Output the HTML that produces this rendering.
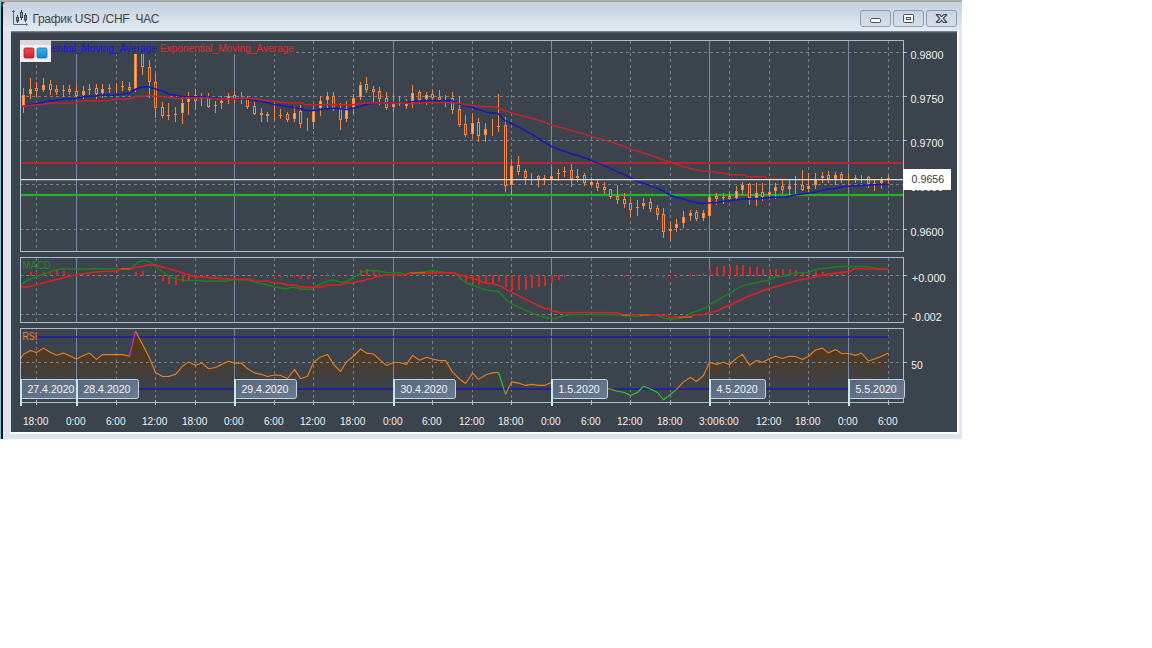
<!DOCTYPE html>
<html lang="ru">
<head>
<meta charset="utf-8">
<title>График USD /CHF ЧАС</title>
<style>
html,body{margin:0;padding:0;background:#fff;}
body{width:1152px;height:648px;position:relative;overflow:hidden;font-family:'Liberation Sans', sans-serif;}
.topstrip{position:absolute;left:0;top:0;width:962px;height:2px;background:linear-gradient(#b3afab 0,#b3afab 65%,#7c7c7c 100%);}
.leftstrip{position:absolute;left:0;top:2px;width:3px;height:437px;background:linear-gradient(90deg,#7fdcf0 0,#4cc4e0 35%,#000 36%,#000 100%);}
.corner{position:absolute;left:1px;top:2px;width:6px;height:5px;background:#3a3a3a;}
.win{position:absolute;left:3px;top:2px;width:959px;height:437px;background:#dbe5f1;border-top-left-radius:4px;}
.titlebar{position:absolute;left:0;top:0;width:959px;height:29px;background:linear-gradient(#c4d1e1 0,#d3dde9 50%,#e3eaf3 100%);border-top-left-radius:4px;}
.title{position:absolute;left:29.4px;top:9px;letter-spacing:-0.27px;font-size:12px;line-height:16px;color:#454545;white-space:pre;}
.btn{position:absolute;top:8px;width:29px;height:15px;border:1px solid #8c9cb4;border-radius:3px;background:linear-gradient(#c9d5e4,#d6dfeb);}
.panel{position:absolute;left:8px;top:29px;width:946px;height:401px;background:#3b434d;box-shadow:0 0 0 0 #000;}
.panel:before{content:"";position:absolute;left:0;top:0;width:100%;height:2px;background:linear-gradient(#8c95a0,#3b434d);}
.hl-r{position:absolute;left:954px;top:29px;width:2px;height:403px;background:#fff;}
.hl-b{position:absolute;left:7px;top:430px;width:949px;height:2px;background:#fff;}
svg{position:absolute;left:0;top:0;}
svg text{font-family:'Liberation Sans', sans-serif;}
</style>
</head>
<body>
<div class="topstrip"></div>
<div class="leftstrip"></div>
<div class="corner"></div>
<div class="win">
  <div class="titlebar"></div>
  <div class="title">График USD /CHF  ЧАС</div>
  <div class="btn" style="left:857px"></div>
  <div class="btn" style="left:890px"></div>
  <div class="btn" style="left:923px"></div>
  <div class="panel"></div>
  <div class="hl-r"></div>
  <div class="hl-b"></div>
</div>
<svg width="1152" height="648" viewBox="0 0 1152 648">
<!-- title icon -->
<g fill="none" stroke="#4d6a8c" stroke-width="1">
<path d="M13.5 10.5V24.5H27"/>
<path d="M12.2 12L13.5 10.3L14.8 12" />
<path d="M25.9 23.2L27.5 24.5L25.9 25.8" />
</g>
<g stroke="#3c4a55" stroke-width="1">
<line x1="17.5" y1="15" x2="17.5" y2="23"/><rect x="16.5" y="17.5" width="2" height="3.5" fill="#6fb06f"/>
<line x1="21.5" y1="10" x2="21.5" y2="20"/><rect x="20.5" y="12.5" width="2" height="5" fill="#6fb06f"/>
<line x1="25.5" y1="13" x2="25.5" y2="22"/><rect x="24.5" y="15.5" width="2" height="4.5" fill="#c07078"/>
</g>
<!-- window buttons glyphs -->
<rect x="870.5" y="18.5" width="10" height="4" rx="1" fill="#fff" stroke="#4c5159" stroke-width="1"/>
<rect x="903.5" y="14.5" width="10" height="8" rx="1" fill="#fff" stroke="#4c5159" stroke-width="1"/>
<rect x="906.5" y="17.5" width="4" height="2" fill="#fff" stroke="#4c5159" stroke-width="1"/>
<path d="M936.4 14.7h3.3l1.9 2.1 1.9-2.1h3.3l-3.6 3.8 3.6 3.8h-3.3l-1.9-2.1-1.9 2.1h-3.3l3.6-3.8z" fill="#fff" stroke="#454a52" stroke-width="1.25" stroke-linejoin="round"/>
<defs>
<clipPath id="c1"><rect x="21" y="41" width="882" height="210"/></clipPath>
<clipPath id="c2"><rect x="21" y="258" width="882" height="64"/></clipPath>
<clipPath id="c3"><rect x="21" y="329" width="882" height="73"/></clipPath>
<linearGradient id="rsig" gradientUnits="userSpaceOnUse" x1="0" y1="334" x2="0" y2="398"><stop offset="0" stop-color="#5e3408" stop-opacity="0.9"/><stop offset="0.45" stop-color="#573612" stop-opacity="0.55"/><stop offset="0.85" stop-color="#4a3a2c" stop-opacity="0.08"/><stop offset="1" stop-color="#4a3a2c" stop-opacity="0"/></linearGradient>
<linearGradient id="dbx" x1="0" y1="0" x2="1" y2="1"><stop offset="0" stop-color="#56667b"/><stop offset="1" stop-color="#6b7c92"/></linearGradient>
<linearGradient id="sqr" x1="0" y1="0" x2="0" y2="1"><stop offset="0" stop-color="#f4484e"/><stop offset="1" stop-color="#cf2533"/></linearGradient>
<linearGradient id="sqb" x1="0" y1="0" x2="0" y2="1"><stop offset="0" stop-color="#34b4ea"/><stop offset="1" stop-color="#1a80c2"/></linearGradient>
</defs>
<polygon points="20.5,358.75 23.5,354.2 30.5,350.4 36.5,352.5 43.5,348.1 50.5,352.5 56.5,355.2 63.5,353.1 69.5,355.8 76.5,359 83.5,355.6 89.5,353.1 96.5,359.4 102.5,354.6 109.5,354.6 116.5,354.6 122.5,354.6 129.5,356.25 135.5,331.25 142.5,344.6 149.5,358 155.5,372.5 162.5,376.5 168.5,376.5 175.5,374.4 182.5,366.25 188.5,362.1 195.5,365.25 201.5,362.9 208.5,368.75 215.5,367.5 221.5,364.4 228.5,361.25 234.5,363.1 241.5,363.1 247.5,368.75 254.5,372.9 261.5,374.4 267.5,376.5 274.5,375 280.5,375.4 287.5,378.5 294.5,369.4 300.5,378.75 307.5,376.25 313.5,362.5 320.5,356.9 327.5,354.4 333.5,364.4 340.5,371.5 346.5,361.9 353.5,356.25 360.5,349 366.5,353.1 373.5,354 379.5,359.4 386.5,365.6 393.5,362.5 399.5,362.5 406.5,364.4 412.5,355.4 419.5,360.25 426.5,357.25 432.5,359 439.5,360.6 445.5,360.6 452.5,371.9 459.5,379 465.5,383.5 472.5,373.1 478.5,379.4 485.5,375 492.5,372.9 498.5,372.25 505.5,394.4 511.5,381.9 518.5,383.1 525.5,385.4 531.5,384.4 538.5,385.4 544.5,385.4 551.5,382.5 558.5,383 564.5,384 571.5,385 577.5,385.5 584.5,386 591.5,387 597.5,388 604.5,388.6 610.5,389.1 617.5,391.25 624.5,392.5 630.5,395.6 637.5,392.5 643.5,386.25 650.5,389.1 657.5,392.5 663.5,399.75 670.5,394.4 676.5,389.4 683.5,381.9 690.5,377.5 696.5,381.5 703.5,375.5 709.5,362.25 716.5,364.4 723.5,362.25 729.5,364.75 736.5,358.1 742.5,354.4 749.5,365.25 756.5,360.4 762.5,362.25 769.5,358.75 775.5,356.25 782.5,358.5 789.5,356.25 795.5,356.5 802.5,359.4 808.5,356.25 815.5,350 822.5,348.1 828.5,353.1 835.5,349.4 841.5,353.5 848.5,353.5 855.5,355.4 861.5,353.1 868.5,361 874.5,359 881.5,356.25 888.5,353.1 888.5,402 20.5,402" fill="url(#rsig)" clip-path="url(#c3)"/>
<g shape-rendering="crispEdges">
<line x1="36.5" y1="41" x2="36.5" y2="251" stroke="#76808c" stroke-width="1" stroke-dasharray="3 3"/>
<line x1="36.5" y1="258" x2="36.5" y2="322" stroke="#76808c" stroke-width="1" stroke-dasharray="3 3"/>
<line x1="36.5" y1="329" x2="36.5" y2="402" stroke="#76808c" stroke-width="1" stroke-dasharray="3 3"/>
<line x1="116.5" y1="41" x2="116.5" y2="251" stroke="#76808c" stroke-width="1" stroke-dasharray="3 3"/>
<line x1="116.5" y1="258" x2="116.5" y2="322" stroke="#76808c" stroke-width="1" stroke-dasharray="3 3"/>
<line x1="116.5" y1="329" x2="116.5" y2="402" stroke="#76808c" stroke-width="1" stroke-dasharray="3 3"/>
<line x1="155.5" y1="41" x2="155.5" y2="251" stroke="#76808c" stroke-width="1" stroke-dasharray="3 3"/>
<line x1="155.5" y1="258" x2="155.5" y2="322" stroke="#76808c" stroke-width="1" stroke-dasharray="3 3"/>
<line x1="155.5" y1="329" x2="155.5" y2="402" stroke="#76808c" stroke-width="1" stroke-dasharray="3 3"/>
<line x1="195.5" y1="41" x2="195.5" y2="251" stroke="#76808c" stroke-width="1" stroke-dasharray="3 3"/>
<line x1="195.5" y1="258" x2="195.5" y2="322" stroke="#76808c" stroke-width="1" stroke-dasharray="3 3"/>
<line x1="195.5" y1="329" x2="195.5" y2="402" stroke="#76808c" stroke-width="1" stroke-dasharray="3 3"/>
<line x1="274.5" y1="41" x2="274.5" y2="251" stroke="#76808c" stroke-width="1" stroke-dasharray="3 3"/>
<line x1="274.5" y1="258" x2="274.5" y2="322" stroke="#76808c" stroke-width="1" stroke-dasharray="3 3"/>
<line x1="274.5" y1="329" x2="274.5" y2="402" stroke="#76808c" stroke-width="1" stroke-dasharray="3 3"/>
<line x1="313.5" y1="41" x2="313.5" y2="251" stroke="#76808c" stroke-width="1" stroke-dasharray="3 3"/>
<line x1="313.5" y1="258" x2="313.5" y2="322" stroke="#76808c" stroke-width="1" stroke-dasharray="3 3"/>
<line x1="313.5" y1="329" x2="313.5" y2="402" stroke="#76808c" stroke-width="1" stroke-dasharray="3 3"/>
<line x1="353.5" y1="41" x2="353.5" y2="251" stroke="#76808c" stroke-width="1" stroke-dasharray="3 3"/>
<line x1="353.5" y1="258" x2="353.5" y2="322" stroke="#76808c" stroke-width="1" stroke-dasharray="3 3"/>
<line x1="353.5" y1="329" x2="353.5" y2="402" stroke="#76808c" stroke-width="1" stroke-dasharray="3 3"/>
<line x1="432.5" y1="41" x2="432.5" y2="251" stroke="#76808c" stroke-width="1" stroke-dasharray="3 3"/>
<line x1="432.5" y1="258" x2="432.5" y2="322" stroke="#76808c" stroke-width="1" stroke-dasharray="3 3"/>
<line x1="432.5" y1="329" x2="432.5" y2="402" stroke="#76808c" stroke-width="1" stroke-dasharray="3 3"/>
<line x1="472.5" y1="41" x2="472.5" y2="251" stroke="#76808c" stroke-width="1" stroke-dasharray="3 3"/>
<line x1="472.5" y1="258" x2="472.5" y2="322" stroke="#76808c" stroke-width="1" stroke-dasharray="3 3"/>
<line x1="472.5" y1="329" x2="472.5" y2="402" stroke="#76808c" stroke-width="1" stroke-dasharray="3 3"/>
<line x1="511.5" y1="41" x2="511.5" y2="251" stroke="#76808c" stroke-width="1" stroke-dasharray="3 3"/>
<line x1="511.5" y1="258" x2="511.5" y2="322" stroke="#76808c" stroke-width="1" stroke-dasharray="3 3"/>
<line x1="511.5" y1="329" x2="511.5" y2="402" stroke="#76808c" stroke-width="1" stroke-dasharray="3 3"/>
<line x1="591.5" y1="41" x2="591.5" y2="251" stroke="#76808c" stroke-width="1" stroke-dasharray="3 3"/>
<line x1="591.5" y1="258" x2="591.5" y2="322" stroke="#76808c" stroke-width="1" stroke-dasharray="3 3"/>
<line x1="591.5" y1="329" x2="591.5" y2="402" stroke="#76808c" stroke-width="1" stroke-dasharray="3 3"/>
<line x1="630.5" y1="41" x2="630.5" y2="251" stroke="#76808c" stroke-width="1" stroke-dasharray="3 3"/>
<line x1="630.5" y1="258" x2="630.5" y2="322" stroke="#76808c" stroke-width="1" stroke-dasharray="3 3"/>
<line x1="630.5" y1="329" x2="630.5" y2="402" stroke="#76808c" stroke-width="1" stroke-dasharray="3 3"/>
<line x1="670.5" y1="41" x2="670.5" y2="251" stroke="#76808c" stroke-width="1" stroke-dasharray="3 3"/>
<line x1="670.5" y1="258" x2="670.5" y2="322" stroke="#76808c" stroke-width="1" stroke-dasharray="3 3"/>
<line x1="670.5" y1="329" x2="670.5" y2="402" stroke="#76808c" stroke-width="1" stroke-dasharray="3 3"/>
<line x1="729.5" y1="41" x2="729.5" y2="251" stroke="#76808c" stroke-width="1" stroke-dasharray="3 3"/>
<line x1="729.5" y1="258" x2="729.5" y2="322" stroke="#76808c" stroke-width="1" stroke-dasharray="3 3"/>
<line x1="729.5" y1="329" x2="729.5" y2="402" stroke="#76808c" stroke-width="1" stroke-dasharray="3 3"/>
<line x1="769.5" y1="41" x2="769.5" y2="251" stroke="#76808c" stroke-width="1" stroke-dasharray="3 3"/>
<line x1="769.5" y1="258" x2="769.5" y2="322" stroke="#76808c" stroke-width="1" stroke-dasharray="3 3"/>
<line x1="769.5" y1="329" x2="769.5" y2="402" stroke="#76808c" stroke-width="1" stroke-dasharray="3 3"/>
<line x1="808.5" y1="41" x2="808.5" y2="251" stroke="#76808c" stroke-width="1" stroke-dasharray="3 3"/>
<line x1="808.5" y1="258" x2="808.5" y2="322" stroke="#76808c" stroke-width="1" stroke-dasharray="3 3"/>
<line x1="808.5" y1="329" x2="808.5" y2="402" stroke="#76808c" stroke-width="1" stroke-dasharray="3 3"/>
<line x1="888.5" y1="41" x2="888.5" y2="251" stroke="#76808c" stroke-width="1" stroke-dasharray="3 3"/>
<line x1="888.5" y1="258" x2="888.5" y2="322" stroke="#76808c" stroke-width="1" stroke-dasharray="3 3"/>
<line x1="888.5" y1="329" x2="888.5" y2="402" stroke="#76808c" stroke-width="1" stroke-dasharray="3 3"/>
<line x1="76.5" y1="40.5" x2="76.5" y2="251.5" stroke="#788a9e" stroke-width="1"/>
<line x1="76.5" y1="257.5" x2="76.5" y2="322.5" stroke="#788a9e" stroke-width="1"/>
<line x1="76.5" y1="328.5" x2="76.5" y2="402.5" stroke="#788a9e" stroke-width="1"/>
<line x1="234.5" y1="40.5" x2="234.5" y2="251.5" stroke="#788a9e" stroke-width="1"/>
<line x1="234.5" y1="257.5" x2="234.5" y2="322.5" stroke="#788a9e" stroke-width="1"/>
<line x1="234.5" y1="328.5" x2="234.5" y2="402.5" stroke="#788a9e" stroke-width="1"/>
<line x1="393.5" y1="40.5" x2="393.5" y2="251.5" stroke="#788a9e" stroke-width="1"/>
<line x1="393.5" y1="257.5" x2="393.5" y2="322.5" stroke="#788a9e" stroke-width="1"/>
<line x1="393.5" y1="328.5" x2="393.5" y2="402.5" stroke="#788a9e" stroke-width="1"/>
<line x1="551.5" y1="40.5" x2="551.5" y2="251.5" stroke="#788a9e" stroke-width="1"/>
<line x1="551.5" y1="257.5" x2="551.5" y2="322.5" stroke="#788a9e" stroke-width="1"/>
<line x1="551.5" y1="328.5" x2="551.5" y2="402.5" stroke="#788a9e" stroke-width="1"/>
<line x1="709.5" y1="40.5" x2="709.5" y2="251.5" stroke="#788a9e" stroke-width="1"/>
<line x1="709.5" y1="257.5" x2="709.5" y2="322.5" stroke="#788a9e" stroke-width="1"/>
<line x1="709.5" y1="328.5" x2="709.5" y2="402.5" stroke="#788a9e" stroke-width="1"/>
<line x1="848.5" y1="40.5" x2="848.5" y2="251.5" stroke="#788a9e" stroke-width="1"/>
<line x1="848.5" y1="257.5" x2="848.5" y2="322.5" stroke="#788a9e" stroke-width="1"/>
<line x1="848.5" y1="328.5" x2="848.5" y2="402.5" stroke="#788a9e" stroke-width="1"/>
<line x1="20" y1="52.5" x2="903.5" y2="52.5" stroke="#76808c" stroke-width="1" stroke-dasharray="3 3"/>
<line x1="903.5" y1="52.5" x2="907" y2="52.5" stroke="#a9bdd1" stroke-width="1"/>
<line x1="20" y1="96.5" x2="903.5" y2="96.5" stroke="#76808c" stroke-width="1" stroke-dasharray="3 3"/>
<line x1="903.5" y1="96.5" x2="907" y2="96.5" stroke="#a9bdd1" stroke-width="1"/>
<line x1="20" y1="140.5" x2="903.5" y2="140.5" stroke="#76808c" stroke-width="1" stroke-dasharray="3 3"/>
<line x1="903.5" y1="140.5" x2="907" y2="140.5" stroke="#a9bdd1" stroke-width="1"/>
<line x1="20" y1="184.5" x2="903.5" y2="184.5" stroke="#76808c" stroke-width="1" stroke-dasharray="3 3"/>
<line x1="903.5" y1="184.5" x2="907" y2="184.5" stroke="#a9bdd1" stroke-width="1"/>
<line x1="20" y1="229.5" x2="903.5" y2="229.5" stroke="#76808c" stroke-width="1" stroke-dasharray="3 3"/>
<line x1="903.5" y1="229.5" x2="907" y2="229.5" stroke="#a9bdd1" stroke-width="1"/>
<line x1="20" y1="275.5" x2="903.5" y2="275.5" stroke="#76808c" stroke-width="1" stroke-dasharray="3 3"/>
<line x1="903.5" y1="275.5" x2="907" y2="275.5" stroke="#a9bdd1" stroke-width="1"/>
<line x1="20" y1="314.5" x2="903.5" y2="314.5" stroke="#76808c" stroke-width="1" stroke-dasharray="3 3"/>
<line x1="903.5" y1="314.5" x2="907" y2="314.5" stroke="#a9bdd1" stroke-width="1"/>
<line x1="20" y1="362.5" x2="903.5" y2="362.5" stroke="#76808c" stroke-width="1" stroke-dasharray="3 3"/>
<line x1="903.5" y1="362.5" x2="907" y2="362.5" stroke="#a9bdd1" stroke-width="1"/>
</g>
<g clip-path="url(#c3)">
<line x1="38" y1="337" x2="888.5" y2="337" stroke="#1a1aa8" stroke-width="1.7"/>
<line x1="20.5" y1="389" x2="888.5" y2="389" stroke="#1a1aa8" stroke-width="1.7"/>
<polyline points="20.5,358.75 23.5,354.2 30.5,350.4 36.5,352.5 43.5,348.1 50.5,352.5 56.5,355.2 63.5,353.1 69.5,355.8 76.5,359 83.5,355.6 89.5,353.1 96.5,359.4 102.5,354.6 109.5,354.6 116.5,354.6 122.5,354.6 129.5,356.25" fill="none" stroke="#e8801c" stroke-width="1.1" stroke-linejoin="round"/>
<polyline points="129.5,356.25 135.5,331.25" fill="none" stroke="#d828d8" stroke-width="1.1" stroke-linejoin="round"/>
<polyline points="135.5,331.25 142.5,344.6 149.5,358 155.5,372.5 162.5,376.5 168.5,376.5 175.5,374.4 182.5,366.25 188.5,362.1 195.5,365.25 201.5,362.9 208.5,368.75 215.5,367.5 221.5,364.4 228.5,361.25 234.5,363.1 241.5,363.1 247.5,368.75 254.5,372.9 261.5,374.4 267.5,376.5 274.5,375 280.5,375.4 287.5,378.5 294.5,369.4 300.5,378.75 307.5,376.25 313.5,362.5 320.5,356.9 327.5,354.4 333.5,364.4 340.5,371.5 346.5,361.9 353.5,356.25 360.5,349 366.5,353.1 373.5,354 379.5,359.4 386.5,365.6 393.5,362.5 399.5,362.5 406.5,364.4 412.5,355.4 419.5,360.25 426.5,357.25 432.5,359 439.5,360.6 445.5,360.6 452.5,371.9 459.5,379 465.5,383.5 472.5,373.1 478.5,379.4 485.5,375 492.5,372.9 498.5,372.25" fill="none" stroke="#e8801c" stroke-width="1.1" stroke-linejoin="round"/>
<polyline points="498.5,372.25 505.5,394.4" fill="none" stroke="#2ccc2c" stroke-width="1.1" stroke-linejoin="round"/>
<polyline points="505.5,394.4 511.5,381.9 518.5,383.1 525.5,385.4 531.5,384.4 538.5,385.4 544.5,385.4 551.5,382.5 558.5,383 564.5,384 571.5,385 577.5,385.5 584.5,386 591.5,387 597.5,388 604.5,388.6 610.5,389.1" fill="none" stroke="#e8801c" stroke-width="1.1" stroke-linejoin="round"/>
<polyline points="610.5,389.1 617.5,391.25 624.5,392.5 630.5,395.6 637.5,392.5 643.5,386.25 650.5,389.1 657.5,392.5 663.5,399.75 670.5,394.4 676.5,389.4" fill="none" stroke="#2ccc2c" stroke-width="1.1" stroke-linejoin="round"/>
<polyline points="676.5,389.4 683.5,381.9 690.5,377.5 696.5,381.5 703.5,375.5 709.5,362.25 716.5,364.4 723.5,362.25 729.5,364.75 736.5,358.1 742.5,354.4 749.5,365.25 756.5,360.4 762.5,362.25 769.5,358.75 775.5,356.25 782.5,358.5 789.5,356.25 795.5,356.5 802.5,359.4 808.5,356.25 815.5,350 822.5,348.1 828.5,353.1 835.5,349.4 841.5,353.5 848.5,353.5 855.5,355.4 861.5,353.1 868.5,361 874.5,359 881.5,356.25 888.5,353.1" fill="none" stroke="#e8801c" stroke-width="1.1" stroke-linejoin="round"/>
</g>
<g clip-path="url(#c2)">
<g shape-rendering="crispEdges">
<rect x="23" y="275" width="1" height="1" fill="#e02626"/>
<rect x="30" y="272" width="2" height="4" fill="#d42a2a"/>
<rect x="36" y="272" width="1" height="4" fill="#d42a2a"/>
<rect x="43" y="272" width="2" height="4" fill="#d42a2a"/>
<rect x="50" y="272" width="1" height="4" fill="#d42a2a"/>
<rect x="56" y="270" width="2" height="6" fill="#d42a2a"/>
<rect x="63" y="271" width="2" height="5" fill="#d42a2a"/>
<rect x="69" y="274" width="1" height="2" fill="#d42a2a"/>
<rect x="76" y="274" width="1" height="2" fill="#d42a2a"/>
<rect x="83" y="274" width="1" height="2" fill="#d42a2a"/>
<rect x="89" y="274" width="1" height="2" fill="#d42a2a"/>
<rect x="96" y="275" width="1" height="1" fill="#e02626"/>
<rect x="102" y="275" width="1" height="1" fill="#e02626"/>
<rect x="109" y="275" width="1" height="1" fill="#e02626"/>
<rect x="116" y="275" width="1" height="1" fill="#e02626"/>
<rect x="122" y="275" width="1" height="1" fill="#e02626"/>
<rect x="129" y="275" width="1" height="1" fill="#e02626"/>
<rect x="135" y="272" width="2" height="4" fill="#d42a2a"/>
<rect x="142" y="271" width="2" height="5" fill="#d42a2a"/>
<rect x="149" y="274" width="1" height="2" fill="#d42a2a"/>
<rect x="155" y="275" width="1" height="1" fill="#e02626"/>
<rect x="162" y="275" width="2" height="6" fill="#d42a2a"/>
<rect x="168" y="275" width="2" height="9" fill="#d42a2a"/>
<rect x="175" y="275" width="2" height="10" fill="#d42a2a"/>
<rect x="182" y="275" width="2" height="7" fill="#d42a2a"/>
<rect x="188" y="275" width="2" height="5" fill="#d42a2a"/>
<rect x="195" y="275" width="2" height="4" fill="#d42a2a"/>
<rect x="201" y="275" width="1" height="3" fill="#d42a2a"/>
<rect x="208" y="275" width="1" height="3" fill="#d42a2a"/>
<rect x="215" y="275" width="1" height="2" fill="#d42a2a"/>
<rect x="221" y="275" width="1" height="2" fill="#d42a2a"/>
<rect x="228" y="275" width="1" height="1" fill="#e02626"/>
<rect x="234" y="275" width="1" height="1" fill="#e02626"/>
<rect x="241" y="275" width="1" height="1" fill="#e02626"/>
<rect x="247" y="275" width="1" height="1" fill="#e02626"/>
<rect x="254" y="275" width="1" height="2" fill="#d42a2a"/>
<rect x="261" y="275" width="1" height="3" fill="#d42a2a"/>
<rect x="267" y="275" width="1" height="3" fill="#d42a2a"/>
<rect x="274" y="275" width="1" height="3" fill="#d42a2a"/>
<rect x="280" y="275" width="1" height="3" fill="#d42a2a"/>
<rect x="287" y="275" width="1" height="3" fill="#d42a2a"/>
<rect x="294" y="275" width="1" height="3" fill="#d42a2a"/>
<rect x="300" y="275" width="2" height="4" fill="#d42a2a"/>
<rect x="307" y="275" width="2" height="4" fill="#d42a2a"/>
<rect x="313" y="275" width="1" height="2" fill="#d42a2a"/>
<rect x="320" y="275" width="1" height="1" fill="#e02626"/>
<rect x="327" y="273" width="1" height="3" fill="#d42a2a"/>
<rect x="333" y="273" width="1" height="3" fill="#d42a2a"/>
<rect x="340" y="275" width="1" height="1" fill="#e02626"/>
<rect x="346" y="275" width="1" height="1" fill="#e02626"/>
<rect x="353" y="273" width="1" height="3" fill="#d42a2a"/>
<rect x="360" y="270" width="2" height="6" fill="#d42a2a"/>
<rect x="366" y="269" width="2" height="7" fill="#d42a2a"/>
<rect x="373" y="271" width="2" height="5" fill="#d42a2a"/>
<rect x="379" y="272" width="1" height="4" fill="#d42a2a"/>
<rect x="386" y="274" width="1" height="2" fill="#d42a2a"/>
<rect x="393" y="275" width="1" height="1" fill="#e02626"/>
<rect x="399" y="275" width="1" height="1" fill="#e02626"/>
<rect x="406" y="275" width="1" height="1" fill="#e02626"/>
<rect x="412" y="275" width="1" height="1" fill="#e02626"/>
<rect x="419" y="275" width="1" height="1" fill="#e02626"/>
<rect x="426" y="275" width="1" height="1" fill="#e02626"/>
<rect x="432" y="275" width="1" height="1" fill="#e02626"/>
<rect x="439" y="275" width="1" height="1" fill="#e02626"/>
<rect x="445" y="275" width="1" height="1" fill="#e02626"/>
<rect x="452" y="275" width="1" height="2" fill="#d42a2a"/>
<rect x="459" y="275" width="2" height="4" fill="#d42a2a"/>
<rect x="465" y="275" width="2" height="7" fill="#d42a2a"/>
<rect x="472" y="275" width="2" height="8" fill="#d42a2a"/>
<rect x="478" y="275" width="2" height="10" fill="#d42a2a"/>
<rect x="485" y="275" width="2" height="8" fill="#d42a2a"/>
<rect x="492" y="275" width="2" height="8" fill="#d42a2a"/>
<rect x="498" y="275" width="2" height="6" fill="#d42a2a"/>
<rect x="505" y="275" width="2" height="12" fill="#d42a2a"/>
<rect x="511" y="275" width="2" height="15" fill="#d42a2a"/>
<rect x="518" y="275" width="2" height="15" fill="#d42a2a"/>
<rect x="525" y="275" width="2" height="15" fill="#d42a2a"/>
<rect x="531" y="275" width="2" height="13" fill="#d42a2a"/>
<rect x="538" y="275" width="2" height="12" fill="#d42a2a"/>
<rect x="544" y="275" width="2" height="11" fill="#d42a2a"/>
<rect x="551" y="275" width="2" height="8" fill="#d42a2a"/>
<rect x="558" y="275" width="2" height="5" fill="#d42a2a"/>
<rect x="564" y="275" width="1" height="3" fill="#d42a2a"/>
<rect x="571" y="275" width="1" height="2" fill="#d42a2a"/>
<rect x="577" y="275" width="1" height="1" fill="#e02626"/>
<rect x="584" y="275" width="1" height="1" fill="#e02626"/>
<rect x="591" y="275" width="1" height="1" fill="#e02626"/>
<rect x="597" y="275" width="1" height="1" fill="#e02626"/>
<rect x="604" y="275" width="1" height="1" fill="#e02626"/>
<rect x="610" y="275" width="1" height="1" fill="#e02626"/>
<rect x="617" y="275" width="1" height="2" fill="#d42a2a"/>
<rect x="624" y="275" width="1" height="2" fill="#d42a2a"/>
<rect x="630" y="275" width="1" height="2" fill="#d42a2a"/>
<rect x="637" y="275" width="1" height="2" fill="#d42a2a"/>
<rect x="643" y="275" width="1" height="1" fill="#e02626"/>
<rect x="650" y="275" width="1" height="1" fill="#e02626"/>
<rect x="657" y="275" width="1" height="1" fill="#e02626"/>
<rect x="663" y="275" width="1" height="3" fill="#d42a2a"/>
<rect x="670" y="275" width="1" height="4" fill="#d42a2a"/>
<rect x="676" y="275" width="1" height="3" fill="#d42a2a"/>
<rect x="683" y="275" width="1" height="1" fill="#e02626"/>
<rect x="690" y="274" width="1" height="2" fill="#d42a2a"/>
<rect x="696" y="274" width="1" height="2" fill="#d42a2a"/>
<rect x="703" y="273" width="1" height="3" fill="#d42a2a"/>
<rect x="709" y="269" width="2" height="7" fill="#d42a2a"/>
<rect x="716" y="267" width="2" height="9" fill="#d42a2a"/>
<rect x="723" y="266" width="2" height="10" fill="#d42a2a"/>
<rect x="729" y="266" width="2" height="10" fill="#d42a2a"/>
<rect x="736" y="265" width="2" height="11" fill="#d42a2a"/>
<rect x="742" y="265" width="2" height="11" fill="#d42a2a"/>
<rect x="749" y="267" width="2" height="9" fill="#d42a2a"/>
<rect x="756" y="267" width="2" height="9" fill="#d42a2a"/>
<rect x="762" y="269" width="2" height="7" fill="#d42a2a"/>
<rect x="769" y="269" width="2" height="7" fill="#d42a2a"/>
<rect x="775" y="269" width="2" height="7" fill="#d42a2a"/>
<rect x="782" y="269" width="2" height="7" fill="#d42a2a"/>
<rect x="789" y="269" width="2" height="7" fill="#d42a2a"/>
<rect x="795" y="270" width="2" height="6" fill="#d42a2a"/>
<rect x="802" y="272" width="2" height="4" fill="#d42a2a"/>
<rect x="808" y="272" width="2" height="4" fill="#d42a2a"/>
<rect x="815" y="271" width="2" height="5" fill="#d42a2a"/>
<rect x="822" y="272" width="2" height="4" fill="#d42a2a"/>
<rect x="828" y="273" width="1" height="3" fill="#d42a2a"/>
<rect x="835" y="273" width="1" height="3" fill="#d42a2a"/>
<rect x="841" y="272" width="2" height="4" fill="#d42a2a"/>
<rect x="848" y="274" width="1" height="2" fill="#d42a2a"/>
<rect x="855" y="275" width="1" height="1" fill="#e02626"/>
<rect x="861" y="275" width="1" height="1" fill="#e02626"/>
<rect x="868" y="275" width="1" height="1" fill="#e02626"/>
<rect x="874" y="275" width="1" height="1" fill="#e02626"/>
<rect x="881" y="275" width="1" height="1" fill="#e02626"/>
<rect x="888" y="275" width="1" height="1" fill="#e02626"/>
</g>
<polyline points="20.5,285.6 24,282.5 30,279 36,276.9 43,274.4 50,271.9 56,270 60,269 118,268.75 130,268.75 133,266.9 137,263.1 141,261 145,260.6 150,261.9 155,266.25 160,270 165,273.75 170,276.9 176,279 182,280.25 195,280.6 208,281.25 225,281.25 232,280 241,279.4 248,280 254,281.9 261,283.5 268,285 274,286.9 281,288.1 286,289 292,287.25 295,287.25 300,289 310,289.4 314,287.25 320,284.4 325,281.9 330,280.6 335,280.6 340,281.9 345,281.9 350,280 354,276.9 358,275 362,272.25 367,270.6 374,270.6 380,271.25 386,272.5 400,272.75 406,274.4 410,272.75 425,271.9 432,270.6 436,271 445,272.5 455,273.1 459,276.9 462,280 465,282.5 472,285 479,287.5 485,289.75 492,291 497,291 499,291.9 502,295 505,298.75 508,301.25 512,304 518,306.9 525,310 531,312.5 538,315.6 545,317.5 551,318.5 555,318.5 560,316.9 565,315.6 570,314.75 580,314.4 612,314.4 620,315 628,316.25 640,316.25 645,315 655,315 660,316.25 665,318.5 670,319 677,318.75 683,317.5 688,315 692,312.5 697,311.25 703,308.5 705,308.1 710,304.4 716,301.25 723,296.9 730,293.1 736,289.4 743,285.6 750,284 756,282.75 762,281.25 768,280.6 771,278.75 776,276.9 782,276.25 789,274.4 795,272.75 808,272.5 815,270 820,268.75 828,268.1 835,266.9 848,266.25 866,266.7 872,267.6 878,269 888.5,269" fill="none" stroke="#1c821c" stroke-width="1.5" stroke-linejoin="round"/>
<polyline points="20.5,286.9 28,286.9 36,285 43,283.1 50,281.25 56,279.75 63,278.1 70,276.25 76,275 83,273.75 90,272.75 100,271.5 118,271 121,268.75 130,268.75 135,267.75 142,266.5 148,265 155.5,265.25 162,266.9 168,268.75 175,270.6 182,272.5 188,274.4 195,276.9 201,276.9 215,278.1 228,279 241,279.4 250,279.4 254,281 268,281.25 272,282.75 281,283.1 287,285 296,285 300,286.9 312,287.25 323,286.9 327,285 340,285 345,283.1 354,282.75 358,281.25 364,280.6 367,279 373,278.5 375,276.9 380,276.5 384,275 395,275 406,274.75 410,273.1 432,273.1 440,272.75 455,273.1 459,275 465,276.25 472,278.1 479,280.6 485,283.1 492,283.5 497,285 501,286 505,288.75 512,292.5 518,295.6 525,299 531,301.9 538,305.6 545,308.75 549,308.5 551,311 555,311.25 558,312.5 605,312.5 618,312.75 622,314.75 650,315 665,315.25 668,316.9 690,317.25 693,315 703,314.75 710,312.5 716,311.25 723,308.1 730,305 736,302.25 743,298.75 750,295.25 756,293.75 762,291 768,288.75 775,286.9 782,285 789,282.75 795,281.25 802,279.4 808,278.75 815,276.9 820,275.6 828,274.4 835,273.1 848,271.5 852,270.6 853,269 888.5,269" fill="none" stroke="#d92222" stroke-width="1.6" stroke-linejoin="round"/>
<polyline points="121,268.75 130,268.75" fill="none" stroke="#b4621c" stroke-width="1.6"/>
<polyline points="410.5,273 425,272.6" fill="none" stroke="#b4621c" stroke-width="1.6"/>
<polyline points="621.5,315 630,315.3" fill="none" stroke="#b4621c" stroke-width="1.6"/>
<polyline points="640,315.3 649,315" fill="none" stroke="#b4621c" stroke-width="1.6"/>
<polyline points="679,317.3 692,317" fill="none" stroke="#b4621c" stroke-width="1.6"/>
</g>
<g clip-path="url(#c1)">
<line x1="20.5" y1="163" x2="903.5" y2="163" stroke="#b5272d" stroke-width="1.8"/>
<line x1="20.5" y1="195" x2="903.5" y2="195" stroke="#1b8f1b" stroke-width="2.4"/>
<line x1="20.5" y1="195" x2="903.5" y2="195" stroke="#34cc34" stroke-width="1"/>
<g shape-rendering="crispEdges">
<rect x="23" y="88" width="1" height="7" fill="#f28a45"/>
<rect x="23" y="106" width="1" height="7" fill="#f28a45"/>
<rect x="22.5" y="95.5" width="2" height="10" fill="#ffb273" stroke="#f28a45" stroke-width="1"/>
<rect x="30" y="78" width="1" height="11" fill="#f28a45"/>
<rect x="30" y="94" width="1" height="5" fill="#f28a45"/>
<rect x="29.5" y="89.5" width="2" height="4" fill="#ffb273" stroke="#f28a45" stroke-width="1"/>
<rect x="36" y="82" width="1" height="6" fill="#f28a45"/>
<rect x="36" y="91" width="1" height="6" fill="#f28a45"/>
<rect x="35.5" y="88.5" width="2" height="2" fill="#3b434d" stroke="#f28a45" stroke-width="1"/>
<rect x="43" y="78" width="1" height="7" fill="#f28a45"/>
<rect x="43" y="90" width="1" height="2" fill="#f28a45"/>
<rect x="42.5" y="85.5" width="2" height="4" fill="#ffb273" stroke="#f28a45" stroke-width="1"/>
<rect x="50" y="80" width="1" height="4" fill="#f28a45"/>
<rect x="50" y="90" width="1" height="5" fill="#f28a45"/>
<rect x="49.5" y="84.5" width="2" height="5" fill="#3b434d" stroke="#f28a45" stroke-width="1"/>
<rect x="56" y="85" width="1" height="4" fill="#f28a45"/>
<rect x="56" y="92" width="1" height="3" fill="#f28a45"/>
<rect x="55.5" y="89.5" width="2" height="2" fill="#3b434d" stroke="#f28a45" stroke-width="1"/>
<rect x="63" y="85" width="1" height="12" fill="#f28a45"/>
<rect x="62" y="90" width="3" height="1" fill="#f28a45"/>
<rect x="69" y="85" width="1" height="4" fill="#f28a45"/>
<rect x="69" y="92" width="1" height="3" fill="#f28a45"/>
<rect x="68.5" y="89.5" width="2" height="2" fill="#3b434d" stroke="#f28a45" stroke-width="1"/>
<rect x="76" y="84" width="1" height="7" fill="#f28a45"/>
<rect x="76" y="96" width="1" height="2" fill="#f28a45"/>
<rect x="75.5" y="91.5" width="2" height="4" fill="#3b434d" stroke="#f28a45" stroke-width="1"/>
<rect x="83" y="86" width="1" height="5" fill="#f28a45"/>
<rect x="83" y="95" width="1" height="4" fill="#f28a45"/>
<rect x="82.5" y="91.5" width="2" height="3" fill="#ffb273" stroke="#f28a45" stroke-width="1"/>
<rect x="89" y="84" width="1" height="11" fill="#f28a45"/>
<rect x="88" y="89" width="3" height="1" fill="#f28a45"/>
<rect x="96" y="84" width="1" height="4" fill="#f28a45"/>
<rect x="96" y="94" width="1" height="5" fill="#f28a45"/>
<rect x="95.5" y="88.5" width="2" height="5" fill="#3b434d" stroke="#f28a45" stroke-width="1"/>
<rect x="102" y="84" width="1" height="5" fill="#f28a45"/>
<rect x="102" y="93" width="1" height="5" fill="#f28a45"/>
<rect x="101.5" y="89.5" width="2" height="3" fill="#ffb273" stroke="#f28a45" stroke-width="1"/>
<rect x="109" y="84" width="1" height="9" fill="#f28a45"/>
<rect x="108" y="88" width="3" height="1" fill="#f28a45"/>
<rect x="116" y="84" width="1" height="9" fill="#f28a45"/>
<rect x="122" y="81" width="1" height="10" fill="#f28a45"/>
<rect x="121" y="86" width="3" height="1" fill="#f28a45"/>
<rect x="129" y="82" width="1" height="5" fill="#f28a45"/>
<rect x="129" y="90" width="1" height="3" fill="#f28a45"/>
<rect x="128.5" y="87.5" width="2" height="2" fill="#3b434d" stroke="#f28a45" stroke-width="1"/>
<rect x="135" y="45" width="1" height="2" fill="#f28a45"/>
<rect x="135" y="89" width="1" height="3" fill="#f28a45"/>
<rect x="134.5" y="47.5" width="2" height="41" fill="#ffb273" stroke="#f28a45" stroke-width="1"/>
<rect x="142" y="44" width="1" height="2" fill="#f28a45"/>
<rect x="142" y="67" width="1" height="8" fill="#f28a45"/>
<rect x="141.5" y="46.5" width="2" height="20" fill="#3b434d" stroke="#f28a45" stroke-width="1"/>
<rect x="149" y="60" width="1" height="7" fill="#f28a45"/>
<rect x="149" y="82" width="1" height="16" fill="#f28a45"/>
<rect x="148.5" y="67.5" width="2" height="14" fill="#3b434d" stroke="#f28a45" stroke-width="1"/>
<rect x="155" y="74" width="1" height="8" fill="#f28a45"/>
<rect x="155" y="108" width="1" height="10" fill="#f28a45"/>
<rect x="154.5" y="82.5" width="2" height="25" fill="#3b434d" stroke="#f28a45" stroke-width="1"/>
<rect x="162" y="102" width="1" height="5" fill="#f28a45"/>
<rect x="162" y="116" width="1" height="2" fill="#f28a45"/>
<rect x="161.5" y="107.5" width="2" height="8" fill="#3b434d" stroke="#f28a45" stroke-width="1"/>
<rect x="168" y="103" width="1" height="17" fill="#f28a45"/>
<rect x="167" y="115" width="3" height="1" fill="#f28a45"/>
<rect x="175" y="107" width="1" height="15" fill="#f28a45"/>
<rect x="174" y="114" width="3" height="1" fill="#f28a45"/>
<rect x="182" y="97" width="1" height="6" fill="#f28a45"/>
<rect x="182" y="113" width="1" height="11" fill="#f28a45"/>
<rect x="181.5" y="103.5" width="2" height="9" fill="#ffb273" stroke="#f28a45" stroke-width="1"/>
<rect x="188" y="92" width="1" height="5" fill="#f28a45"/>
<rect x="188" y="102" width="1" height="13" fill="#f28a45"/>
<rect x="187.5" y="97.5" width="2" height="4" fill="#ffb273" stroke="#f28a45" stroke-width="1"/>
<rect x="195" y="89" width="1" height="6" fill="#f28a45"/>
<rect x="195" y="101" width="1" height="9" fill="#f28a45"/>
<rect x="194.5" y="95.5" width="2" height="5" fill="#3b434d" stroke="#f28a45" stroke-width="1"/>
<rect x="201" y="93" width="1" height="4" fill="#f28a45"/>
<rect x="201" y="99" width="1" height="7" fill="#f28a45"/>
<rect x="200.5" y="97.5" width="2" height="1" fill="#ffb273" stroke="#f28a45" stroke-width="1"/>
<rect x="208" y="93" width="1" height="4" fill="#f28a45"/>
<rect x="208" y="107" width="1" height="1" fill="#f28a45"/>
<rect x="207.5" y="97.5" width="2" height="9" fill="#3b434d" stroke="#f28a45" stroke-width="1"/>
<rect x="215" y="101" width="1" height="12" fill="#f28a45"/>
<rect x="214" y="105" width="3" height="1" fill="#f28a45"/>
<rect x="221" y="96" width="1" height="5" fill="#f28a45"/>
<rect x="221" y="103" width="1" height="6" fill="#f28a45"/>
<rect x="220.5" y="101.5" width="2" height="1" fill="#ffb273" stroke="#f28a45" stroke-width="1"/>
<rect x="228" y="93" width="1" height="3" fill="#f28a45"/>
<rect x="228" y="100" width="1" height="4" fill="#f28a45"/>
<rect x="227.5" y="96.5" width="2" height="3" fill="#ffb273" stroke="#f28a45" stroke-width="1"/>
<rect x="234" y="91" width="1" height="4" fill="#f28a45"/>
<rect x="234" y="99" width="1" height="4" fill="#f28a45"/>
<rect x="233.5" y="95.5" width="2" height="3" fill="#3b434d" stroke="#f28a45" stroke-width="1"/>
<rect x="241" y="92" width="1" height="12" fill="#f28a45"/>
<rect x="247" y="96" width="1" height="2" fill="#f28a45"/>
<rect x="247" y="107" width="1" height="2" fill="#f28a45"/>
<rect x="246.5" y="98.5" width="2" height="8" fill="#3b434d" stroke="#f28a45" stroke-width="1"/>
<rect x="254" y="102" width="1" height="4" fill="#f28a45"/>
<rect x="254" y="114" width="1" height="1" fill="#f28a45"/>
<rect x="253.5" y="106.5" width="2" height="7" fill="#3b434d" stroke="#f28a45" stroke-width="1"/>
<rect x="261" y="108" width="1" height="5" fill="#f28a45"/>
<rect x="261" y="115" width="1" height="7" fill="#f28a45"/>
<rect x="260.5" y="113.5" width="2" height="1" fill="#ffb273" stroke="#f28a45" stroke-width="1"/>
<rect x="267" y="112" width="1" height="2" fill="#f28a45"/>
<rect x="267" y="116" width="1" height="6" fill="#f28a45"/>
<rect x="266.5" y="114.5" width="2" height="1" fill="#3b434d" stroke="#f28a45" stroke-width="1"/>
<rect x="274" y="103" width="1" height="17" fill="#f28a45"/>
<rect x="280" y="109" width="1" height="10" fill="#f28a45"/>
<rect x="279" y="115" width="3" height="1" fill="#f28a45"/>
<rect x="287" y="112" width="1" height="2" fill="#f28a45"/>
<rect x="287" y="120" width="1" height="2" fill="#f28a45"/>
<rect x="286.5" y="114.5" width="2" height="5" fill="#3b434d" stroke="#f28a45" stroke-width="1"/>
<rect x="294" y="106" width="1" height="7" fill="#f28a45"/>
<rect x="294" y="119" width="1" height="3" fill="#f28a45"/>
<rect x="293.5" y="113.5" width="2" height="5" fill="#ffb273" stroke="#f28a45" stroke-width="1"/>
<rect x="300" y="105" width="1" height="6" fill="#f28a45"/>
<rect x="300" y="124" width="1" height="4" fill="#f28a45"/>
<rect x="299.5" y="111.5" width="2" height="12" fill="#3b434d" stroke="#f28a45" stroke-width="1"/>
<rect x="307" y="118" width="1" height="13" fill="#f28a45"/>
<rect x="313" y="106" width="1" height="4" fill="#f28a45"/>
<rect x="313" y="122" width="1" height="7" fill="#f28a45"/>
<rect x="312.5" y="110.5" width="2" height="11" fill="#ffb273" stroke="#f28a45" stroke-width="1"/>
<rect x="320" y="96" width="1" height="5" fill="#f28a45"/>
<rect x="320" y="108" width="1" height="8" fill="#f28a45"/>
<rect x="319.5" y="101.5" width="2" height="6" fill="#ffb273" stroke="#f28a45" stroke-width="1"/>
<rect x="327" y="92" width="1" height="4" fill="#f28a45"/>
<rect x="327" y="100" width="1" height="8" fill="#f28a45"/>
<rect x="326.5" y="96.5" width="2" height="3" fill="#ffb273" stroke="#f28a45" stroke-width="1"/>
<rect x="333" y="92" width="1" height="4" fill="#f28a45"/>
<rect x="333" y="108" width="1" height="3" fill="#f28a45"/>
<rect x="332.5" y="96.5" width="2" height="11" fill="#3b434d" stroke="#f28a45" stroke-width="1"/>
<rect x="340" y="103" width="1" height="5" fill="#f28a45"/>
<rect x="340" y="120" width="1" height="10" fill="#f28a45"/>
<rect x="339.5" y="108.5" width="2" height="11" fill="#3b434d" stroke="#f28a45" stroke-width="1"/>
<rect x="346" y="101" width="1" height="7" fill="#f28a45"/>
<rect x="346" y="119" width="1" height="3" fill="#f28a45"/>
<rect x="345.5" y="108.5" width="2" height="10" fill="#ffb273" stroke="#f28a45" stroke-width="1"/>
<rect x="353" y="94" width="1" height="4" fill="#f28a45"/>
<rect x="353" y="108" width="1" height="6" fill="#f28a45"/>
<rect x="352.5" y="98.5" width="2" height="9" fill="#ffb273" stroke="#f28a45" stroke-width="1"/>
<rect x="360" y="82" width="1" height="3" fill="#f28a45"/>
<rect x="360" y="97" width="1" height="3" fill="#f28a45"/>
<rect x="359.5" y="85.5" width="2" height="11" fill="#ffb273" stroke="#f28a45" stroke-width="1"/>
<rect x="366" y="77" width="1" height="7" fill="#f28a45"/>
<rect x="366" y="90" width="1" height="3" fill="#f28a45"/>
<rect x="365.5" y="84.5" width="2" height="5" fill="#3b434d" stroke="#f28a45" stroke-width="1"/>
<rect x="373" y="86" width="1" height="3" fill="#f28a45"/>
<rect x="373" y="92" width="1" height="11" fill="#f28a45"/>
<rect x="372.5" y="89.5" width="2" height="2" fill="#3b434d" stroke="#f28a45" stroke-width="1"/>
<rect x="379" y="87" width="1" height="4" fill="#f28a45"/>
<rect x="379" y="99" width="1" height="6" fill="#f28a45"/>
<rect x="378.5" y="91.5" width="2" height="7" fill="#3b434d" stroke="#f28a45" stroke-width="1"/>
<rect x="386" y="92" width="1" height="6" fill="#f28a45"/>
<rect x="386" y="108" width="1" height="2" fill="#f28a45"/>
<rect x="385.5" y="98.5" width="2" height="9" fill="#3b434d" stroke="#f28a45" stroke-width="1"/>
<rect x="393" y="94" width="1" height="10" fill="#f28a45"/>
<rect x="393" y="107" width="1" height="5" fill="#f28a45"/>
<rect x="392.5" y="104.5" width="2" height="2" fill="#ffb273" stroke="#f28a45" stroke-width="1"/>
<rect x="399" y="96" width="1" height="6" fill="#f28a45"/>
<rect x="399" y="104" width="1" height="2" fill="#f28a45"/>
<rect x="398.5" y="102.5" width="2" height="1" fill="#ffb273" stroke="#f28a45" stroke-width="1"/>
<rect x="406" y="99" width="1" height="5" fill="#f28a45"/>
<rect x="406" y="106" width="1" height="3" fill="#f28a45"/>
<rect x="405.5" y="104.5" width="2" height="1" fill="#ffb273" stroke="#f28a45" stroke-width="1"/>
<rect x="412" y="85" width="1" height="8" fill="#f28a45"/>
<rect x="412" y="104" width="1" height="4" fill="#f28a45"/>
<rect x="411.5" y="93.5" width="2" height="10" fill="#ffb273" stroke="#f28a45" stroke-width="1"/>
<rect x="419" y="90" width="1" height="2" fill="#f28a45"/>
<rect x="419" y="100" width="1" height="4" fill="#f28a45"/>
<rect x="418.5" y="92.5" width="2" height="7" fill="#3b434d" stroke="#f28a45" stroke-width="1"/>
<rect x="426" y="92" width="1" height="3" fill="#f28a45"/>
<rect x="426" y="99" width="1" height="6" fill="#f28a45"/>
<rect x="425.5" y="95.5" width="2" height="3" fill="#ffb273" stroke="#f28a45" stroke-width="1"/>
<rect x="432" y="90" width="1" height="4" fill="#f28a45"/>
<rect x="432" y="98" width="1" height="3" fill="#f28a45"/>
<rect x="431.5" y="94.5" width="2" height="3" fill="#3b434d" stroke="#f28a45" stroke-width="1"/>
<rect x="439" y="90" width="1" height="7" fill="#f28a45"/>
<rect x="439" y="100" width="1" height="1" fill="#f28a45"/>
<rect x="438.5" y="97.5" width="2" height="2" fill="#3b434d" stroke="#f28a45" stroke-width="1"/>
<rect x="445" y="95" width="1" height="12" fill="#f28a45"/>
<rect x="452" y="92" width="1" height="6" fill="#f28a45"/>
<rect x="452" y="110" width="1" height="4" fill="#f28a45"/>
<rect x="451.5" y="98.5" width="2" height="11" fill="#3b434d" stroke="#f28a45" stroke-width="1"/>
<rect x="459" y="96" width="1" height="13" fill="#f28a45"/>
<rect x="459" y="125" width="1" height="2" fill="#f28a45"/>
<rect x="458.5" y="109.5" width="2" height="15" fill="#3b434d" stroke="#f28a45" stroke-width="1"/>
<rect x="465" y="115" width="1" height="9" fill="#f28a45"/>
<rect x="465" y="135" width="1" height="2" fill="#f28a45"/>
<rect x="464.5" y="124.5" width="2" height="10" fill="#3b434d" stroke="#f28a45" stroke-width="1"/>
<rect x="472" y="114" width="1" height="9" fill="#f28a45"/>
<rect x="472" y="134" width="1" height="4" fill="#f28a45"/>
<rect x="471.5" y="123.5" width="2" height="10" fill="#ffb273" stroke="#f28a45" stroke-width="1"/>
<rect x="478" y="118" width="1" height="4" fill="#f28a45"/>
<rect x="478" y="136" width="1" height="6" fill="#f28a45"/>
<rect x="477.5" y="122.5" width="2" height="13" fill="#3b434d" stroke="#f28a45" stroke-width="1"/>
<rect x="485" y="123" width="1" height="6" fill="#f28a45"/>
<rect x="485" y="135" width="1" height="7" fill="#f28a45"/>
<rect x="484.5" y="129.5" width="2" height="5" fill="#ffb273" stroke="#f28a45" stroke-width="1"/>
<rect x="492" y="119" width="1" height="17" fill="#f28a45"/>
<rect x="498" y="94" width="1" height="38" fill="#f28a45"/>
<rect x="497" y="126" width="3" height="1" fill="#f28a45"/>
<rect x="505" y="117" width="1" height="8" fill="#f28a45"/>
<rect x="505" y="186" width="1" height="6" fill="#f28a45"/>
<rect x="504.5" y="125.5" width="2" height="60" fill="#3b434d" stroke="#f28a45" stroke-width="1"/>
<rect x="511" y="159" width="1" height="7" fill="#f28a45"/>
<rect x="511" y="185" width="1" height="10" fill="#f28a45"/>
<rect x="510.5" y="166.5" width="2" height="18" fill="#ffb273" stroke="#f28a45" stroke-width="1"/>
<rect x="518" y="156" width="1" height="9" fill="#f28a45"/>
<rect x="518" y="172" width="1" height="3" fill="#f28a45"/>
<rect x="517.5" y="165.5" width="2" height="6" fill="#3b434d" stroke="#f28a45" stroke-width="1"/>
<rect x="525" y="169" width="1" height="2" fill="#f28a45"/>
<rect x="525" y="178" width="1" height="6" fill="#f28a45"/>
<rect x="524.5" y="171.5" width="2" height="6" fill="#3b434d" stroke="#f28a45" stroke-width="1"/>
<rect x="531" y="173" width="1" height="12" fill="#f28a45"/>
<rect x="538" y="175" width="1" height="1" fill="#f28a45"/>
<rect x="538" y="179" width="1" height="8" fill="#f28a45"/>
<rect x="537.5" y="176.5" width="2" height="2" fill="#3b434d" stroke="#f28a45" stroke-width="1"/>
<rect x="544" y="175" width="1" height="3" fill="#f28a45"/>
<rect x="544" y="180" width="1" height="5" fill="#f28a45"/>
<rect x="543.5" y="178.5" width="2" height="1" fill="#ffb273" stroke="#f28a45" stroke-width="1"/>
<rect x="551" y="167" width="1" height="9" fill="#f28a45"/>
<rect x="551" y="179" width="1" height="5" fill="#f28a45"/>
<rect x="550.5" y="176.5" width="2" height="2" fill="#ffb273" stroke="#f28a45" stroke-width="1"/>
<rect x="558" y="169" width="1" height="12" fill="#f28a45"/>
<rect x="557" y="173" width="3" height="1" fill="#f28a45"/>
<rect x="564" y="167" width="1" height="10" fill="#f28a45"/>
<rect x="563" y="171" width="3" height="1" fill="#f28a45"/>
<rect x="571" y="164" width="1" height="6" fill="#f28a45"/>
<rect x="571" y="179" width="1" height="8" fill="#f28a45"/>
<rect x="570.5" y="170.5" width="2" height="8" fill="#3b434d" stroke="#f28a45" stroke-width="1"/>
<rect x="577" y="169" width="1" height="7" fill="#f28a45"/>
<rect x="577" y="178" width="1" height="4" fill="#f28a45"/>
<rect x="576.5" y="176.5" width="2" height="1" fill="#ffb273" stroke="#f28a45" stroke-width="1"/>
<rect x="584" y="173" width="1" height="2" fill="#f28a45"/>
<rect x="584" y="183" width="1" height="3" fill="#f28a45"/>
<rect x="583.5" y="175.5" width="2" height="7" fill="#3b434d" stroke="#f28a45" stroke-width="1"/>
<rect x="591" y="177" width="1" height="5" fill="#f28a45"/>
<rect x="591" y="185" width="1" height="1" fill="#f28a45"/>
<rect x="590.5" y="182.5" width="2" height="2" fill="#ffb273" stroke="#f28a45" stroke-width="1"/>
<rect x="597" y="180" width="1" height="3" fill="#f28a45"/>
<rect x="597" y="188" width="1" height="3" fill="#f28a45"/>
<rect x="596.5" y="183.5" width="2" height="4" fill="#3b434d" stroke="#f28a45" stroke-width="1"/>
<rect x="604" y="182" width="1" height="5" fill="#f28a45"/>
<rect x="604" y="190" width="1" height="4" fill="#f28a45"/>
<rect x="603.5" y="187.5" width="2" height="2" fill="#3b434d" stroke="#f28a45" stroke-width="1"/>
<rect x="610" y="189" width="1" height="0" fill="#f28a45"/>
<rect x="610" y="197" width="1" height="2" fill="#f28a45"/>
<rect x="609.5" y="189.5" width="2" height="7" fill="#3b434d" stroke="#f28a45" stroke-width="1"/>
<rect x="617" y="185" width="1" height="11" fill="#f28a45"/>
<rect x="617" y="200" width="1" height="4" fill="#f28a45"/>
<rect x="616.5" y="196.5" width="2" height="3" fill="#3b434d" stroke="#f28a45" stroke-width="1"/>
<rect x="624" y="193" width="1" height="6" fill="#f28a45"/>
<rect x="624" y="204" width="1" height="4" fill="#f28a45"/>
<rect x="623.5" y="199.5" width="2" height="4" fill="#3b434d" stroke="#f28a45" stroke-width="1"/>
<rect x="630" y="199" width="1" height="4" fill="#f28a45"/>
<rect x="630" y="210" width="1" height="7" fill="#f28a45"/>
<rect x="629.5" y="203.5" width="2" height="6" fill="#3b434d" stroke="#f28a45" stroke-width="1"/>
<rect x="637" y="200" width="1" height="16" fill="#f28a45"/>
<rect x="636" y="207" width="3" height="1" fill="#f28a45"/>
<rect x="643" y="198" width="1" height="5" fill="#f28a45"/>
<rect x="643" y="206" width="1" height="3" fill="#f28a45"/>
<rect x="642.5" y="203.5" width="2" height="2" fill="#ffb273" stroke="#f28a45" stroke-width="1"/>
<rect x="650" y="198" width="1" height="4" fill="#f28a45"/>
<rect x="650" y="209" width="1" height="3" fill="#f28a45"/>
<rect x="649.5" y="202.5" width="2" height="6" fill="#3b434d" stroke="#f28a45" stroke-width="1"/>
<rect x="657" y="205" width="1" height="3" fill="#f28a45"/>
<rect x="657" y="215" width="1" height="5" fill="#f28a45"/>
<rect x="656.5" y="208.5" width="2" height="6" fill="#3b434d" stroke="#f28a45" stroke-width="1"/>
<rect x="663" y="208" width="1" height="6" fill="#f28a45"/>
<rect x="663" y="232" width="1" height="6" fill="#f28a45"/>
<rect x="662.5" y="214.5" width="2" height="17" fill="#3b434d" stroke="#f28a45" stroke-width="1"/>
<rect x="670" y="222" width="1" height="7" fill="#f28a45"/>
<rect x="670" y="231" width="1" height="10" fill="#f28a45"/>
<rect x="669.5" y="229.5" width="2" height="1" fill="#ffb273" stroke="#f28a45" stroke-width="1"/>
<rect x="676" y="219" width="1" height="5" fill="#f28a45"/>
<rect x="676" y="228" width="1" height="4" fill="#f28a45"/>
<rect x="675.5" y="224.5" width="2" height="3" fill="#ffb273" stroke="#f28a45" stroke-width="1"/>
<rect x="683" y="211" width="1" height="6" fill="#f28a45"/>
<rect x="683" y="223" width="1" height="5" fill="#f28a45"/>
<rect x="682.5" y="217.5" width="2" height="5" fill="#ffb273" stroke="#f28a45" stroke-width="1"/>
<rect x="690" y="210" width="1" height="3" fill="#f28a45"/>
<rect x="690" y="216" width="1" height="5" fill="#f28a45"/>
<rect x="689.5" y="213.5" width="2" height="2" fill="#ffb273" stroke="#f28a45" stroke-width="1"/>
<rect x="696" y="210" width="1" height="2" fill="#f28a45"/>
<rect x="696" y="219" width="1" height="2" fill="#f28a45"/>
<rect x="695.5" y="212.5" width="2" height="6" fill="#3b434d" stroke="#f28a45" stroke-width="1"/>
<rect x="703" y="210" width="1" height="3" fill="#f28a45"/>
<rect x="703" y="218" width="1" height="3" fill="#f28a45"/>
<rect x="702.5" y="213.5" width="2" height="4" fill="#ffb273" stroke="#f28a45" stroke-width="1"/>
<rect x="709" y="194" width="1" height="3" fill="#f28a45"/>
<rect x="709" y="216" width="1" height="0" fill="#f28a45"/>
<rect x="708.5" y="197.5" width="2" height="18" fill="#ffb273" stroke="#f28a45" stroke-width="1"/>
<rect x="716" y="193" width="1" height="3" fill="#f28a45"/>
<rect x="716" y="199" width="1" height="6" fill="#f28a45"/>
<rect x="715.5" y="196.5" width="2" height="2" fill="#3b434d" stroke="#f28a45" stroke-width="1"/>
<rect x="723" y="193" width="1" height="11" fill="#f28a45"/>
<rect x="722" y="197" width="3" height="1" fill="#f28a45"/>
<rect x="729" y="192" width="1" height="4" fill="#f28a45"/>
<rect x="729" y="199" width="1" height="2" fill="#f28a45"/>
<rect x="728.5" y="196.5" width="2" height="2" fill="#3b434d" stroke="#f28a45" stroke-width="1"/>
<rect x="736" y="186" width="1" height="5" fill="#f28a45"/>
<rect x="736" y="198" width="1" height="2" fill="#f28a45"/>
<rect x="735.5" y="191.5" width="2" height="6" fill="#ffb273" stroke="#f28a45" stroke-width="1"/>
<rect x="742" y="182" width="1" height="3" fill="#f28a45"/>
<rect x="742" y="190" width="1" height="5" fill="#f28a45"/>
<rect x="741.5" y="185.5" width="2" height="4" fill="#ffb273" stroke="#f28a45" stroke-width="1"/>
<rect x="749" y="183" width="1" height="1" fill="#f28a45"/>
<rect x="749" y="198" width="1" height="7" fill="#f28a45"/>
<rect x="748.5" y="184.5" width="2" height="13" fill="#3b434d" stroke="#f28a45" stroke-width="1"/>
<rect x="756" y="183" width="1" height="10" fill="#f28a45"/>
<rect x="756" y="198" width="1" height="8" fill="#f28a45"/>
<rect x="755.5" y="193.5" width="2" height="4" fill="#ffb273" stroke="#f28a45" stroke-width="1"/>
<rect x="762" y="183" width="1" height="9" fill="#f28a45"/>
<rect x="762" y="197" width="1" height="4" fill="#f28a45"/>
<rect x="761.5" y="192.5" width="2" height="4" fill="#3b434d" stroke="#f28a45" stroke-width="1"/>
<rect x="769" y="180" width="1" height="12" fill="#f28a45"/>
<rect x="769" y="195" width="1" height="2" fill="#f28a45"/>
<rect x="768.5" y="192.5" width="2" height="2" fill="#ffb273" stroke="#f28a45" stroke-width="1"/>
<rect x="775" y="183" width="1" height="4" fill="#f28a45"/>
<rect x="775" y="191" width="1" height="8" fill="#f28a45"/>
<rect x="774.5" y="187.5" width="2" height="3" fill="#ffb273" stroke="#f28a45" stroke-width="1"/>
<rect x="782" y="180" width="1" height="6" fill="#f28a45"/>
<rect x="782" y="190" width="1" height="4" fill="#f28a45"/>
<rect x="781.5" y="186.5" width="2" height="3" fill="#3b434d" stroke="#f28a45" stroke-width="1"/>
<rect x="789" y="180" width="1" height="6" fill="#f28a45"/>
<rect x="789" y="189" width="1" height="7" fill="#f28a45"/>
<rect x="788.5" y="186.5" width="2" height="2" fill="#ffb273" stroke="#f28a45" stroke-width="1"/>
<rect x="795" y="176" width="1" height="18" fill="#f28a45"/>
<rect x="794" y="184" width="3" height="1" fill="#f28a45"/>
<rect x="802" y="170" width="1" height="15" fill="#f28a45"/>
<rect x="802" y="190" width="1" height="1" fill="#f28a45"/>
<rect x="801.5" y="185.5" width="2" height="4" fill="#3b434d" stroke="#f28a45" stroke-width="1"/>
<rect x="808" y="173" width="1" height="13" fill="#f28a45"/>
<rect x="808" y="189" width="1" height="3" fill="#f28a45"/>
<rect x="807.5" y="186.5" width="2" height="2" fill="#ffb273" stroke="#f28a45" stroke-width="1"/>
<rect x="815" y="173" width="1" height="6" fill="#f28a45"/>
<rect x="815" y="185" width="1" height="4" fill="#f28a45"/>
<rect x="814.5" y="179.5" width="2" height="5" fill="#ffb273" stroke="#f28a45" stroke-width="1"/>
<rect x="822" y="172" width="1" height="4" fill="#f28a45"/>
<rect x="822" y="178" width="1" height="5" fill="#f28a45"/>
<rect x="821.5" y="176.5" width="2" height="1" fill="#ffb273" stroke="#f28a45" stroke-width="1"/>
<rect x="828" y="171" width="1" height="4" fill="#f28a45"/>
<rect x="828" y="179" width="1" height="4" fill="#f28a45"/>
<rect x="827.5" y="175.5" width="2" height="3" fill="#3b434d" stroke="#f28a45" stroke-width="1"/>
<rect x="835" y="172" width="1" height="3" fill="#f28a45"/>
<rect x="835" y="179" width="1" height="6" fill="#f28a45"/>
<rect x="834.5" y="175.5" width="2" height="3" fill="#ffb273" stroke="#f28a45" stroke-width="1"/>
<rect x="841" y="172" width="1" height="2" fill="#f28a45"/>
<rect x="841" y="179" width="1" height="4" fill="#f28a45"/>
<rect x="840.5" y="174.5" width="2" height="4" fill="#3b434d" stroke="#f28a45" stroke-width="1"/>
<rect x="848" y="174" width="1" height="12" fill="#f28a45"/>
<rect x="855" y="175" width="1" height="3" fill="#f28a45"/>
<rect x="855" y="180" width="1" height="3" fill="#f28a45"/>
<rect x="854.5" y="178.5" width="2" height="1" fill="#ffb273" stroke="#f28a45" stroke-width="1"/>
<rect x="861" y="175" width="1" height="8" fill="#f28a45"/>
<rect x="860" y="179" width="3" height="1" fill="#f28a45"/>
<rect x="868" y="176" width="1" height="1" fill="#f28a45"/>
<rect x="868" y="184" width="1" height="4" fill="#f28a45"/>
<rect x="867.5" y="177.5" width="2" height="6" fill="#3b434d" stroke="#f28a45" stroke-width="1"/>
<rect x="874" y="180" width="1" height="11" fill="#f28a45"/>
<rect x="873" y="183" width="3" height="1" fill="#f28a45"/>
<rect x="881" y="177" width="1" height="3" fill="#f28a45"/>
<rect x="881" y="183" width="1" height="6" fill="#f28a45"/>
<rect x="880.5" y="180.5" width="2" height="2" fill="#ffb273" stroke="#f28a45" stroke-width="1"/>
<rect x="888" y="175" width="1" height="3" fill="#f28a45"/>
<rect x="888" y="180" width="1" height="4" fill="#f28a45"/>
<rect x="887.5" y="178.5" width="2" height="1" fill="#ffb273" stroke="#f28a45" stroke-width="1"/>
</g>
<polyline points="20.5,106.75 30,104.9 36.5,103.6 50,101.1 63,99.25 76,98.4 83,96.75 96,96.1 103,95.25 116,94.9 123,94.25 129.5,92.75 135.5,89.25 142,87 149,87 155.5,89 162,90.9 168.7,94 175,95 182,96.5 195,96.75 208,97.1 215,98 228,98.75 241,98.75 248,99 254.5,100.5 261,101.5 268,102.75 274,104.6 281,105.25 287.5,106.5 294,107.4 300,108.75 307,110.6 314,110.6 320.5,109.4 327,108.75 334,108.1 340,108.75 347,109.4 353.5,108.1 360,106.25 366.7,104.4 373,103.4 380,102.9 393,102.4 406,102.2 413,101.6 420,101.2 426,100.9 432,100.7 452,100.6 459,103.75 465,105.6 472,107.5 479,109.75 485.5,111.9 492,113.1 497,113.1 499,114.4 505,120.6 512,123.75 518.5,126.9 525,130.6 532,134.4 538,138.1 545,142.5 551,146.25 558,149 565,151.5 571,153.75 578,155.6 584,157.5 591,160.4 597.7,163.1 604,165.6 611,168.75 617.5,171.9 624,174.4 630.7,177.8 637,181 644,183.5 650.5,185.6 657,188.1 663.7,191.25 670,195 677,197.5 683.5,199 690,201 697,202.75 703,203.5 710,202.75 716.5,202.75 723,201.25 730,200.6 736,200 743,199 750,199 756,198.75 762,198.6 769,197.5 786,196.9 793,195.25 802,194 808.9,193.1 815.5,192.25 822,190.6 828.7,189 835,188.75 842,186.9 848.5,186.25 862,185.6 875,184.75 888.5,184.4" fill="none" stroke="#1717bd" stroke-width="1.5" stroke-linejoin="round"/>
<polyline points="20.5,106.75 30,105.5 43,104.25 50,103 76,102.75 83,100.5 96,100.9 110,100.5 116.5,99 130,99 135.5,96.5 142,96.5 149,95.25 155.5,96.3 168,97.1 175,98.4 195,98 208,98 215,98.75 234,98.75 241,97.9 254,98.75 261,100 274,101.25 281,102.5 294,103 303,103.1 305,104.75 320,104.75 327,104.4 353,104.75 360,103.75 366,103.1 380,103.1 400,102.9 412,103.5 420,102.75 432,102.6 452,102.75 459,103.1 465,104.75 479,106.25 497,106.9 499,108.75 505,110.6 512,113.1 525,116.5 538,120 551,124.75 558,126.9 564,128.1 571,130.6 584.5,134.4 597.7,138.1 611,141.9 624,146.25 631,149.4 637,151 650,155 664,160 677,164.5 690,168.5 697,170 703,171 710,171.25 716,172.5 723,173.1 730,174.8 746,174.8 747,176.7 765.5,176.7 766.5,179 786,179" fill="none" stroke="#c4242a" stroke-width="1.5" stroke-linejoin="round"/>
<line x1="20.5" y1="179.6" x2="903.5" y2="179.6" stroke="#dcdcdc" stroke-width="1.4"/>
<rect x="21" y="41" width="275" height="13" fill="#3b434d"/>
<text x="23.2" y="52" fill="#1616ee" font-size="11" text-anchor="start" textLength="133.5" lengthAdjust="spacingAndGlyphs">Exponential_Moving_Average</text>
<text x="159.8" y="52" fill="#ee2424" font-size="11" text-anchor="start" textLength="134" lengthAdjust="spacingAndGlyphs">Exponential_Moving_Average</text>
</g>
<g shape-rendering="crispEdges">
<rect x="20.5" y="40.5" width="883.0" height="211.0" fill="none" stroke="#a9bdd1" stroke-width="1"/>
<rect x="20.5" y="257.5" width="883.0" height="65.0" fill="none" stroke="#a9bdd1" stroke-width="1"/>
<rect x="20.5" y="328.5" width="883.0" height="74.0" fill="none" stroke="#a9bdd1" stroke-width="1"/>
</g>
<text x="22.5" y="268.8" fill="#1f8c1f" font-size="11" text-anchor="start" textLength="28" lengthAdjust="spacingAndGlyphs">MACD</text>
<rect x="22" y="330" width="16" height="11" fill="#3b434d"/>
<text x="22.5" y="339.8" fill="#f0871f" font-size="11" text-anchor="start" textLength="14.6" lengthAdjust="spacingAndGlyphs">RSI</text>
<rect x="20" y="40" width="31" height="22" fill="#f0f0f0"/>
<rect x="20" y="40" width="31" height="5" fill="#d9d9d9"/>
<rect x="24" y="48" width="10" height="10" rx="1.5" fill="url(#sqr)" stroke="#b01828" stroke-width="0.8"/>
<rect x="37" y="48" width="10" height="10" rx="1.5" fill="url(#sqb)" stroke="#1a74ae" stroke-width="0.8"/>
<text x="910.6" y="58.8" fill="#f2f2f2" font-size="11" text-anchor="start" textLength="33" lengthAdjust="spacingAndGlyphs">0.9800</text>
<text x="910.6" y="102.8" fill="#f2f2f2" font-size="11" text-anchor="start" textLength="33" lengthAdjust="spacingAndGlyphs">0.9750</text>
<text x="910.6" y="146.8" fill="#f2f2f2" font-size="11" text-anchor="start" textLength="33" lengthAdjust="spacingAndGlyphs">0.9700</text>
<text x="910.6" y="190.8" fill="#f2f2f2" font-size="11" text-anchor="start" textLength="33" lengthAdjust="spacingAndGlyphs">0.9650</text>
<text x="910.6" y="235.8" fill="#f2f2f2" font-size="11" text-anchor="start" textLength="33" lengthAdjust="spacingAndGlyphs">0.9600</text>
<text x="911.8" y="281.9" fill="#f2f2f2" font-size="11" text-anchor="start" textLength="33.8" lengthAdjust="spacingAndGlyphs">+0.000</text>
<text x="911.6" y="321.3" fill="#f2f2f2" font-size="11" text-anchor="start" textLength="30" lengthAdjust="spacingAndGlyphs">-0.002</text>
<text x="911.3" y="368.8" fill="#f2f2f2" font-size="11" text-anchor="start" textLength="11.4" lengthAdjust="spacingAndGlyphs">50</text>
<rect x="903" y="169" width="48" height="21" fill="#ffffff"/>
<text x="911.6" y="183.1" fill="#3a3a3a" font-size="11" text-anchor="start" textLength="32.6" lengthAdjust="spacingAndGlyphs">0.9656</text>
<g shape-rendering="crispEdges">
<line x1="36.5" y1="400" x2="36.5" y2="405" stroke="#a9bdd1" stroke-width="1"/>
<line x1="116.5" y1="400" x2="116.5" y2="405" stroke="#a9bdd1" stroke-width="1"/>
<line x1="155.5" y1="400" x2="155.5" y2="405" stroke="#a9bdd1" stroke-width="1"/>
<line x1="195.5" y1="400" x2="195.5" y2="405" stroke="#a9bdd1" stroke-width="1"/>
<line x1="274.5" y1="400" x2="274.5" y2="405" stroke="#a9bdd1" stroke-width="1"/>
<line x1="313.5" y1="400" x2="313.5" y2="405" stroke="#a9bdd1" stroke-width="1"/>
<line x1="353.5" y1="400" x2="353.5" y2="405" stroke="#a9bdd1" stroke-width="1"/>
<line x1="432.5" y1="400" x2="432.5" y2="405" stroke="#a9bdd1" stroke-width="1"/>
<line x1="472.5" y1="400" x2="472.5" y2="405" stroke="#a9bdd1" stroke-width="1"/>
<line x1="511.5" y1="400" x2="511.5" y2="405" stroke="#a9bdd1" stroke-width="1"/>
<line x1="591.5" y1="400" x2="591.5" y2="405" stroke="#a9bdd1" stroke-width="1"/>
<line x1="630.5" y1="400" x2="630.5" y2="405" stroke="#a9bdd1" stroke-width="1"/>
<line x1="670.5" y1="400" x2="670.5" y2="405" stroke="#a9bdd1" stroke-width="1"/>
<line x1="729.5" y1="400" x2="729.5" y2="405" stroke="#a9bdd1" stroke-width="1"/>
<line x1="769.5" y1="400" x2="769.5" y2="405" stroke="#a9bdd1" stroke-width="1"/>
<line x1="808.5" y1="400" x2="808.5" y2="405" stroke="#a9bdd1" stroke-width="1"/>
<line x1="888.5" y1="400" x2="888.5" y2="405" stroke="#a9bdd1" stroke-width="1"/>
</g>
<rect x="20.5" y="379.5" width="56" height="19" rx="2" fill="url(#dbx)" stroke="#c3d3e3" stroke-width="1"/>
<rect x="20" y="379" width="2" height="27" fill="#c4ece4" shape-rendering="crispEdges"/>
<text x="27.4" y="392.9" fill="#f4f4f4" font-size="11" text-anchor="start" textLength="47" lengthAdjust="spacingAndGlyphs">27.4.2020</text>
<rect x="76.5" y="379.5" width="62" height="19" rx="2" fill="url(#dbx)" stroke="#c3d3e3" stroke-width="1"/>
<rect x="76" y="379" width="2" height="27" fill="#c4ece4" shape-rendering="crispEdges"/>
<text x="83.4" y="392.9" fill="#f4f4f4" font-size="11" text-anchor="start" textLength="47" lengthAdjust="spacingAndGlyphs">28.4.2020</text>
<rect x="234.5" y="379.5" width="62" height="19" rx="2" fill="url(#dbx)" stroke="#c3d3e3" stroke-width="1"/>
<rect x="234" y="379" width="2" height="27" fill="#c4ece4" shape-rendering="crispEdges"/>
<text x="241.4" y="392.9" fill="#f4f4f4" font-size="11" text-anchor="start" textLength="47" lengthAdjust="spacingAndGlyphs">29.4.2020</text>
<rect x="393.5" y="379.5" width="62" height="19" rx="2" fill="url(#dbx)" stroke="#c3d3e3" stroke-width="1"/>
<rect x="393" y="379" width="2" height="27" fill="#c4ece4" shape-rendering="crispEdges"/>
<text x="400.4" y="392.9" fill="#f4f4f4" font-size="11" text-anchor="start" textLength="47" lengthAdjust="spacingAndGlyphs">30.4.2020</text>
<rect x="551.5" y="379.5" width="56" height="19" rx="2" fill="url(#dbx)" stroke="#c3d3e3" stroke-width="1"/>
<rect x="551" y="379" width="2" height="27" fill="#c4ece4" shape-rendering="crispEdges"/>
<text x="558.4" y="392.9" fill="#f4f4f4" font-size="11" text-anchor="start" textLength="41.3" lengthAdjust="spacingAndGlyphs">1.5.2020</text>
<rect x="709.5" y="379.5" width="56" height="19" rx="2" fill="url(#dbx)" stroke="#c3d3e3" stroke-width="1"/>
<rect x="709" y="379" width="2" height="27" fill="#c4ece4" shape-rendering="crispEdges"/>
<text x="716.4" y="392.9" fill="#f4f4f4" font-size="11" text-anchor="start" textLength="41.3" lengthAdjust="spacingAndGlyphs">4.5.2020</text>
<rect x="848.5" y="379.5" width="56" height="19" rx="2" fill="url(#dbx)" stroke="#c3d3e3" stroke-width="1"/>
<rect x="848" y="379" width="2" height="27" fill="#c4ece4" shape-rendering="crispEdges"/>
<text x="855.4" y="392.9" fill="#f4f4f4" font-size="11" text-anchor="start" textLength="41.3" lengthAdjust="spacingAndGlyphs">5.5.2020</text>
<text x="35.7" y="424.8" fill="#f2f2f2" font-size="11" text-anchor="middle" textLength="25.5" lengthAdjust="spacingAndGlyphs">18:00</text>
<text x="75.7" y="424.8" fill="#f2f2f2" font-size="11" text-anchor="middle" textLength="19.6" lengthAdjust="spacingAndGlyphs">0:00</text>
<text x="115.7" y="424.8" fill="#f2f2f2" font-size="11" text-anchor="middle" textLength="19.6" lengthAdjust="spacingAndGlyphs">6:00</text>
<text x="154.7" y="424.8" fill="#f2f2f2" font-size="11" text-anchor="middle" textLength="25.5" lengthAdjust="spacingAndGlyphs">12:00</text>
<text x="194.7" y="424.8" fill="#f2f2f2" font-size="11" text-anchor="middle" textLength="25.5" lengthAdjust="spacingAndGlyphs">18:00</text>
<text x="233.7" y="424.8" fill="#f2f2f2" font-size="11" text-anchor="middle" textLength="19.6" lengthAdjust="spacingAndGlyphs">0:00</text>
<text x="273.7" y="424.8" fill="#f2f2f2" font-size="11" text-anchor="middle" textLength="19.6" lengthAdjust="spacingAndGlyphs">6:00</text>
<text x="312.7" y="424.8" fill="#f2f2f2" font-size="11" text-anchor="middle" textLength="25.5" lengthAdjust="spacingAndGlyphs">12:00</text>
<text x="352.7" y="424.8" fill="#f2f2f2" font-size="11" text-anchor="middle" textLength="25.5" lengthAdjust="spacingAndGlyphs">18:00</text>
<text x="392.7" y="424.8" fill="#f2f2f2" font-size="11" text-anchor="middle" textLength="19.6" lengthAdjust="spacingAndGlyphs">0:00</text>
<text x="431.7" y="424.8" fill="#f2f2f2" font-size="11" text-anchor="middle" textLength="19.6" lengthAdjust="spacingAndGlyphs">6:00</text>
<text x="471.7" y="424.8" fill="#f2f2f2" font-size="11" text-anchor="middle" textLength="25.5" lengthAdjust="spacingAndGlyphs">12:00</text>
<text x="510.7" y="424.8" fill="#f2f2f2" font-size="11" text-anchor="middle" textLength="25.5" lengthAdjust="spacingAndGlyphs">18:00</text>
<text x="550.7" y="424.8" fill="#f2f2f2" font-size="11" text-anchor="middle" textLength="19.6" lengthAdjust="spacingAndGlyphs">0:00</text>
<text x="590.7" y="424.8" fill="#f2f2f2" font-size="11" text-anchor="middle" textLength="19.6" lengthAdjust="spacingAndGlyphs">6:00</text>
<text x="629.7" y="424.8" fill="#f2f2f2" font-size="11" text-anchor="middle" textLength="25.5" lengthAdjust="spacingAndGlyphs">12:00</text>
<text x="669.7" y="424.8" fill="#f2f2f2" font-size="11" text-anchor="middle" textLength="25.5" lengthAdjust="spacingAndGlyphs">18:00</text>
<text x="708.7" y="424.8" fill="#f2f2f2" font-size="11" text-anchor="middle" textLength="19.6" lengthAdjust="spacingAndGlyphs">3:00</text>
<text x="728.7" y="424.8" fill="#f2f2f2" font-size="11" text-anchor="middle" textLength="19.6" lengthAdjust="spacingAndGlyphs">6:00</text>
<text x="768.7" y="424.8" fill="#f2f2f2" font-size="11" text-anchor="middle" textLength="25.5" lengthAdjust="spacingAndGlyphs">12:00</text>
<text x="807.7" y="424.8" fill="#f2f2f2" font-size="11" text-anchor="middle" textLength="25.5" lengthAdjust="spacingAndGlyphs">18:00</text>
<text x="847.7" y="424.8" fill="#f2f2f2" font-size="11" text-anchor="middle" textLength="19.6" lengthAdjust="spacingAndGlyphs">0:00</text>
<text x="887.7" y="424.8" fill="#f2f2f2" font-size="11" text-anchor="middle" textLength="19.6" lengthAdjust="spacingAndGlyphs">6:00</text>
</svg>
</body>
</html>
